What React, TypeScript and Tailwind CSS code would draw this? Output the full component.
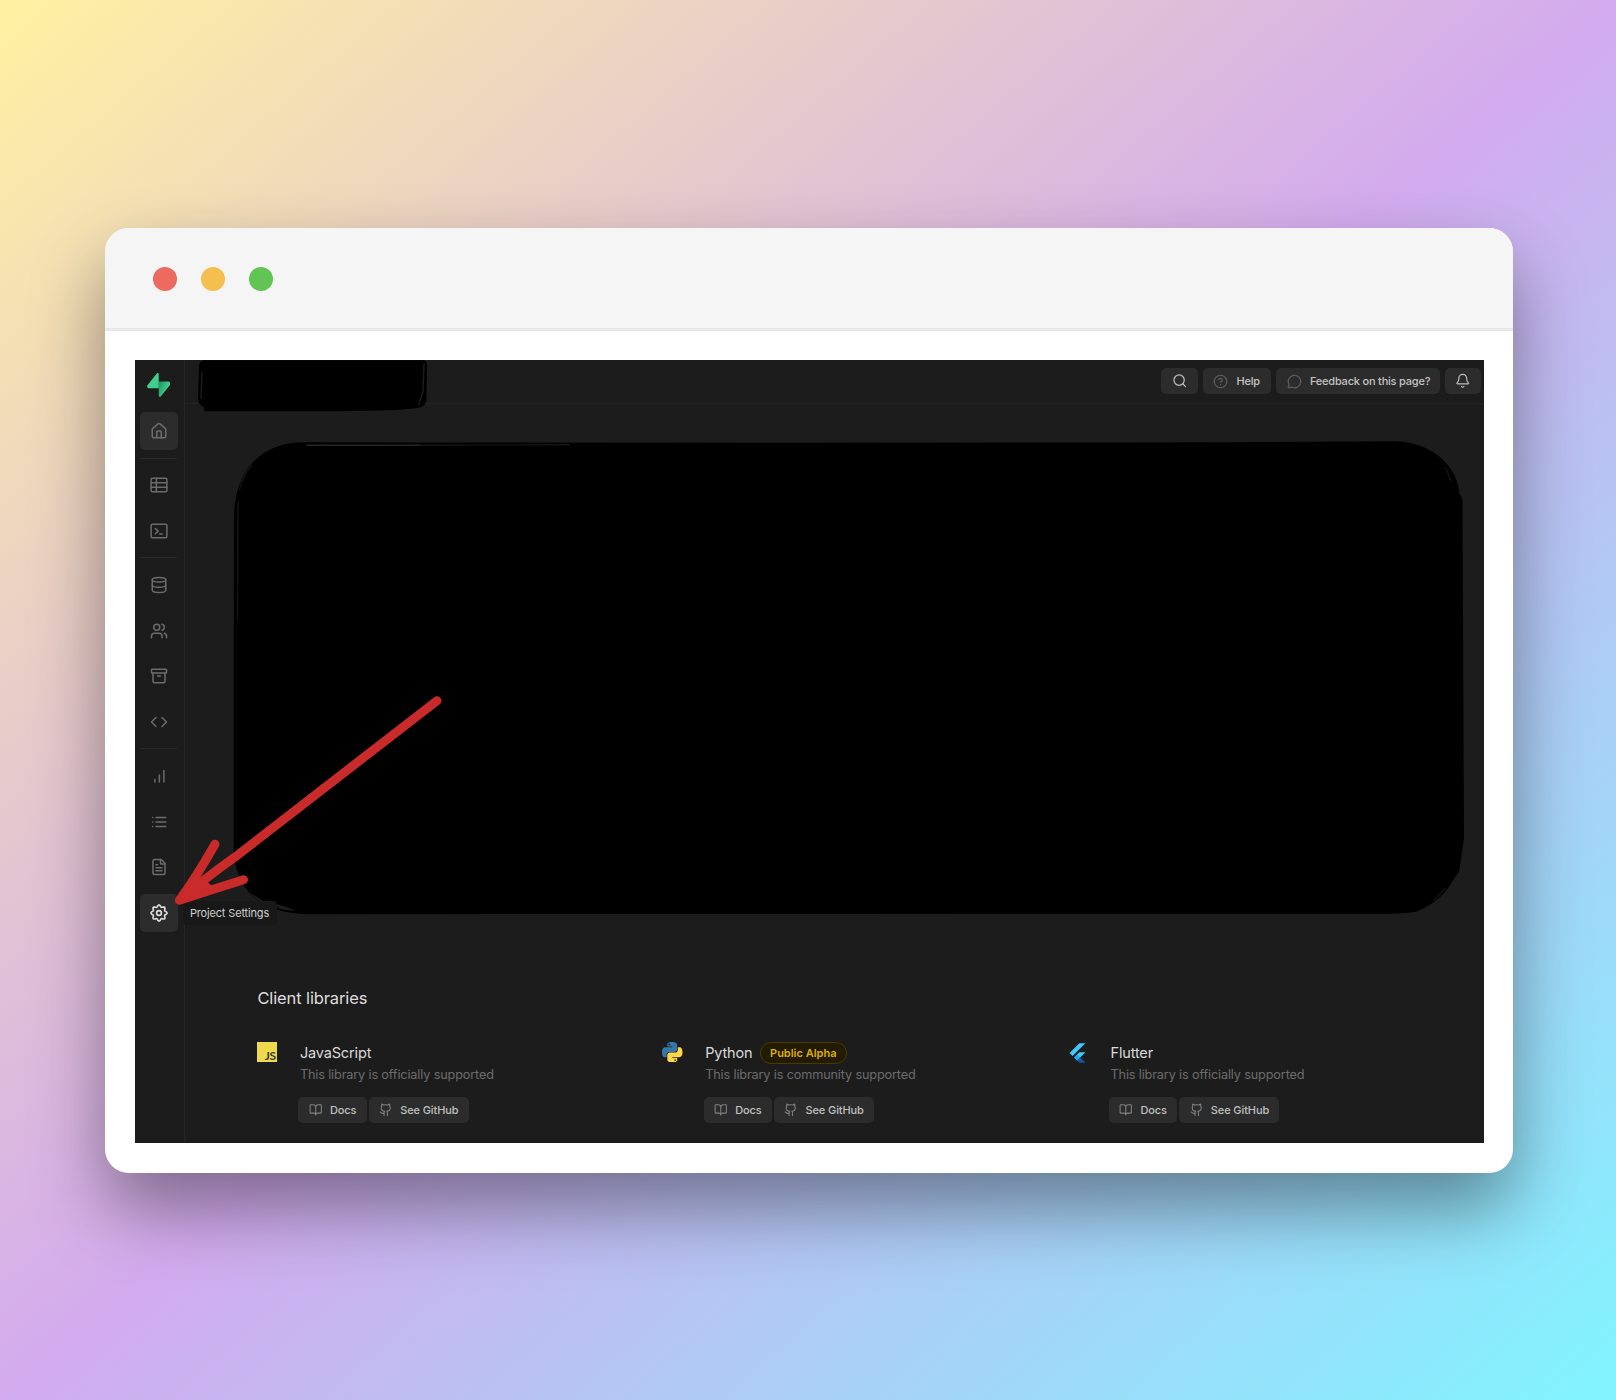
import React from "react";
import {
  Archive, Bell, BookOpen, Code, Database, FileText, Github,
  House, MessageCircle, CircleHelp, Search, Users,
} from "lucide-react";

type IconProps = { size?: number; strokeWidth?: number; className?: string };

function Glyph({ size = 18, strokeWidth = 2, children }: IconProps & { children: React.ReactNode }) {
  return (
    <svg viewBox="0 0 24 24" width={size} height={size} fill="none" stroke="currentColor" strokeWidth={strokeWidth} strokeLinecap="round" strokeLinejoin="round">
      {children}
    </svg>
  );
}

const TableIcon = (p: IconProps) => (
  <Glyph {...p}>
    <rect x="1.500" y="3" width="21" height="18" rx="1.800" />
    <path d="M8.500 3v18M1.500 9h21M1.500 15h21" />
  </Glyph>
);

const SqlIcon = (p: IconProps) => (
  <Glyph {...p}>
    <rect x="1.500" y="3" width="21" height="18" rx="1.800" />
    <path d="m7.200 8.800 3.800 3.400-3.800 3.400M12.800 16h3.400" />
  </Glyph>
);

const BarsIcon = (p: IconProps) => (
  <Glyph {...p}>
    <path d="M6.500 20v-3.500M12.500 20v-9.500M18.500 20V4.500" />
  </Glyph>
);

const ListIcon = (p: IconProps) => (
  <Glyph {...p}>
    <path d="M8 6h13M8 12h13M8 18h13M3.600 6h.1M3.600 12h.1M3.600 18h.1" />
  </Glyph>
);

const GEAR_OUTLINE = Array.from({ length: 96 }, (_, i) => {
  const a = (i / 96) * Math.PI * 2;
  const r = 9.4 + 1.3 * Math.cos(8 * a);
  return `${(12 + r * Math.cos(a)).toFixed(2)},${(12 + r * Math.sin(a)).toFixed(2)}`;
}).join(" ");

const GearIcon = (p: IconProps) => (
  <Glyph {...p} strokeWidth={2.2}>
    <polygon points={GEAR_OUTLINE} />
    <circle cx="12" cy="12" r="3.200" />
  </Glyph>
);

function SupabaseLogo() {
  return (
    <svg viewBox="0 0 109 113" className="h-[24px] w-[23.500px]">
      <defs>
        <linearGradient id="sb" x1="53.97" y1="54.97" x2="94.16" y2="71.83" gradientUnits="userSpaceOnUse">
          <stop stopColor="#249361" />
          <stop offset="1" stopColor="#3ECF8E" />
        </linearGradient>
      </defs>
      <path d="M63.7076 110.284C60.8481 113.885 55.0502 111.912 54.9813 107.314L53.9738 40.0627L99.1935 40.0627C107.384 40.0627 111.952 49.5228 106.859 55.9374L63.7076 110.284Z" fill="url(#sb)" />
      <path d="M45.317 2.07103C48.1765 -1.53037 53.9745 0.442937 54.0434 5.041L54.4849 72.2922H9.83113C1.64038 72.2922 -2.92775 62.8321 2.1655 56.4175L45.317 2.07103Z" fill="#3ECF8E" />
    </svg>
  );
}

function PythonLogo() {
  return (
    <svg viewBox="0 0 110 110" className="size-[20.500px]">
      <path fill="#3776ab" d="M54 0C27 0 28.500 12 28.500 12v12.500H55V28H18S0 26 0 54.500 15.500 82 15.500 82H25V69s-.5-15.500 15.300-15.500h26.300s14.800.2 14.800-14.300V15S83.500 0 54 0ZM39.500 8.500a4.800 4.800 0 1 1 0 9.600 4.800 4.800 0 0 1 0-9.600Z" />
      <path fill="#ffd845" d="M56 110c27 0 25.500-12 25.500-12V85.500H55V82h37s18 2 18-26.500S94.500 28 94.500 28H85v13s.5 15.500-15.300 15.500H43.400s-14.800-.2-14.800 14.300V95S26.500 110 56 110Zm14.500-8.500a4.800 4.800 0 1 1 0-9.600 4.800 4.800 0 0 1 0 9.600Z" />
    </svg>
  );
}

function FlutterLogo() {
  return (
    <svg viewBox="0 0 166 202" className="h-[22px] w-[21px]">
      <path fill="#40c8fd" d="M37.700 128.900 9.800 101 100.400 10.400h55.800zM156.200 94h-55.800l-48.200 48.100 27.900 27.900z" />
      <path fill="#0d5aa7" d="m79.500 170.700 20.900 20.900h55.800l-48.600-49.200z" />
      <path fill="#22a5ee" d="m51.900 142.600 27.900-27.900 27.800 27.900-27.800 27.900z" />
    </svg>
  );
}

function JsLogo() {
  return (
    <div className="flex size-[20.500px] items-end justify-end bg-[#efd94c] pr-[1.500px] font-['Lato'] text-[12px] leading-[12px] font-bold tracking-[-0.300px] text-[#3a3a2c]">
      JS
    </div>
  );
}

function SideItem({ icon: Icon, active = false, bright = false }: { icon: React.ElementType; active?: boolean; bright?: boolean }) {
  return (
    <div className={`flex h-[38px] w-[38px] shrink-0 items-center justify-center rounded-[5px] ${active ? "bg-[#2c2c2c]" : ""} ${bright ? "text-[#dcdcdc]" : "text-[#6c6c6c]"}`}>
      <Icon size={18} strokeWidth={2} />
    </div>
  );
}

const Divider = () => <div className="h-px w-[37px] shrink-0 bg-[#292929]" />;

function TopButton({ icon: Icon, label, width, dim = false }: { icon: React.ElementType; label?: string; width: string; dim?: boolean }) {
  return (
    <div className={`flex h-[25.500px] items-center rounded-[5px] bg-[#2c2c2c] ${width} ${label ? "gap-[8px] pl-[10.500px]" : "justify-center"}`}>
      <Icon size={label ? 15 : 15.500} strokeWidth={1.900} className={`shrink-0 ${dim ? "text-[#5f5f5f]" : "text-[#bcbcbc]"}`} />
      {label && <span className="pt-px text-[11px] font-medium tracking-[-0.200px] whitespace-nowrap text-[#c4c4c4]">{label}</span>}
    </div>
  );
}

function SmallButton({ icon: Icon, label, width }: { icon: React.ElementType; label: string; width: string }) {
  return (
    <div className={`flex h-[25.500px] items-center gap-[7.500px] rounded-[5px] bg-[#2c2c2c] pl-[10.500px] ${width}`}>
      <Icon size={13.500} strokeWidth={1.900} className="shrink-0 text-[#808080]" />
      <span className="text-[11px] font-medium tracking-[-0.100px] whitespace-nowrap text-[#c0c0c0]">{label}</span>
    </div>
  );
}

function Library({ logo, name, note, badge }: { logo: React.ReactNode; name: string; note: string; badge?: string }) {
  return (
    <div className="flex w-[405.300px] shrink-0">
      <div className="w-[41.500px] shrink-0 pt-[1px]">{logo}</div>
      <div>
        <div className="flex h-[24px] items-center gap-[7.500px] pl-[1.500px]">
          <span className="pt-px text-[14.500px] tracking-[-0.150px] text-[#dadada]">{name}</span>
          {badge && (
            <span className="flex h-[21.500px] w-[86.500px] items-center justify-center rounded-full border border-[#4a3a00] bg-[#231b00] text-[11px] font-semibold text-[#dcae00]">
              {badge}
            </span>
          )}
        </div>
        <div className="pt-px pl-[1.500px] text-[12.700px] leading-[18px] tracking-[-0.150px] whitespace-nowrap text-[#6c6c6c]">{note}</div>
        <div className="mt-[13.500px] flex gap-[2px]">
          <SmallButton icon={BookOpen} label="Docs" width="w-[68.300px]" />
          <SmallButton icon={Github} label="See GitHub" width="w-[100px]" />
        </div>
      </div>
    </div>
  );
}

function Annotations() {
  return (
    <svg viewBox="135.500 360.300 1348.500 783" className="pointer-events-none absolute inset-0 h-full w-full" fill="none">
      <path fill="#000" d="M204 360.500H425Q428 362 427.500 370L427 400Q426 406 420 408Q400 411 340 411.500L205 411.500L204 407Q199 405 198.500 400L199.500 366Q200 362 204 360.500Z" />
      <path stroke="#1c1c1c" strokeWidth="1.500" d="M202.500 372 201.500 399M424.500 364 423.500 392 419 405" />
      <path fill="#000" d="M307 442.500Q700 443.500 1230 442.500L1395 441.500C1432 442 1458 466 1460 494Q1463.500 497 1463 505L1464.500 838Q1463 850 1459.500 872L1453 881Q1444 900 1417 912Q1400 914 1390 914L306 914.500C270 913 240 900 234.300 855V520C234 475 258 441.500 307 442.500Z" />
      <path stroke="#262626" strokeWidth="1.500" strokeLinecap="round" d="M307 445.500H420" />
      <path stroke="#141414" strokeWidth="1.400" d="M420 445.500 570 445M253 465Q243 476 240 490M238.500 502 238 620M1446 468 1452 482M1434 901 1446 888" />
      <path fill="#1c1c1c" d="M249 892Q260 904 277 910Q262 900 249 892ZM268 903Q284 905 296 911Q279 911 268 903Z" />
    </svg>
  );
}

function Arrow() {
  return (
    <svg viewBox="135.500 360.300 1348.500 783" className="pointer-events-none absolute inset-0 h-full w-full" fill="none">
      <path stroke="#c92a2a" strokeWidth="9" strokeLinecap="round" strokeLinejoin="round" d="M437.500 701Q320 792 236 857Q205 879 180 900.500M215.500 844.500Q197 877 180 900.500M244 880Q212 890 180 900.500" />
      <path fill="#c92a2a" d="M180 900.500 197 873 205 880 215 888Z" />
    </svg>
  );
}

export default function App() {
  return (
    <div className="h-[1400px] w-[1616px] overflow-hidden bg-[linear-gradient(to_bottom_right,#fff1a1_0%,#d3abee_50%,#80f4ff_100%)] pt-[228px] pl-[105px] font-['Inter',sans-serif]">
      <div className="h-[945px] w-[1407.500px] overflow-hidden rounded-[24px] bg-white shadow-[0_36px_72px_rgba(0,0,0,0.4)]">
        <div className="flex h-[103px] items-center gap-[24px] border-b-[3px] border-[#e8e8e8] bg-[#f5f5f5] pl-[48px] pt-[2px]">
          <div className="size-[24px] rounded-full bg-[#ec6a5e]" />
          <div className="size-[24px] rounded-full bg-[#f4bf4f]" />
          <div className="size-[24px] rounded-full bg-[#61c554]" />
        </div>
        <div className="pt-[29.300px] pl-[30.400px]">
          <div className="relative flex h-[783px] w-[1348.500px] overflow-hidden bg-[#1c1c1c]">
            <aside className="flex w-[49.500px] shrink-0 flex-col items-center gap-[7.600px] border-r border-[#262626] pt-[12.500px] pr-[2px]">
              <div className="mb-[7.700px] h-[24px] pr-[0.500px]"><SupabaseLogo /></div>
              <SideItem icon={House} active />
              <Divider />
              <SideItem icon={TableIcon} />
              <SideItem icon={SqlIcon} />
              <Divider />
              <SideItem icon={Database} />
              <SideItem icon={Users} />
              <SideItem icon={Archive} />
              <SideItem icon={Code} />
              <Divider />
              <SideItem icon={BarsIcon} />
              <SideItem icon={ListIcon} />
              <SideItem icon={FileText} />
              <SideItem icon={GearIcon} active bright />
            </aside>
            <main className="min-w-0 flex-1">
              <header className="flex h-[43.500px] items-start justify-end gap-[5px] border-b border-[#242424] pt-[8px] pr-[2.500px]">
                <TopButton icon={Search} width="w-[36.500px]" />
                <TopButton icon={CircleHelp} label="Help" width="w-[68.500px]" dim />
                <TopButton icon={MessageCircle} label="Feedback on this page?" width="w-[163.500px]" dim />
                <TopButton icon={Bell} width="w-[36.500px]" />
              </header>
              <section className="pt-[582px] pl-[72px]">
                <h2 className="pl-[0.500px] text-[16.500px] leading-[24px] tracking-[-0.120px] text-[#dedede]">Client libraries</h2>
                <div className="mt-[31px] flex">
                  <Library logo={<JsLogo />} name="JavaScript" note="This library is officially supported" />
                  <Library logo={<PythonLogo />} name="Python" badge="Public Alpha" note="This library is community supported" />
                  <Library logo={<FlutterLogo />} name="Flutter" note="This library is officially supported" />
                </div>
              </section>
            </main>
            <Annotations />
            <div className="absolute top-[540.500px] left-[48px] flex h-[24px] w-[94px] items-center rounded-[4px] bg-[#181818] pt-px pl-[6.500px] text-[11px] tracking-[-0.160px] whitespace-nowrap text-[#cfcfcf]">
              Project Settings
            </div>
            <Arrow />
          </div>
        </div>
      </div>
    </div>
  );
}
